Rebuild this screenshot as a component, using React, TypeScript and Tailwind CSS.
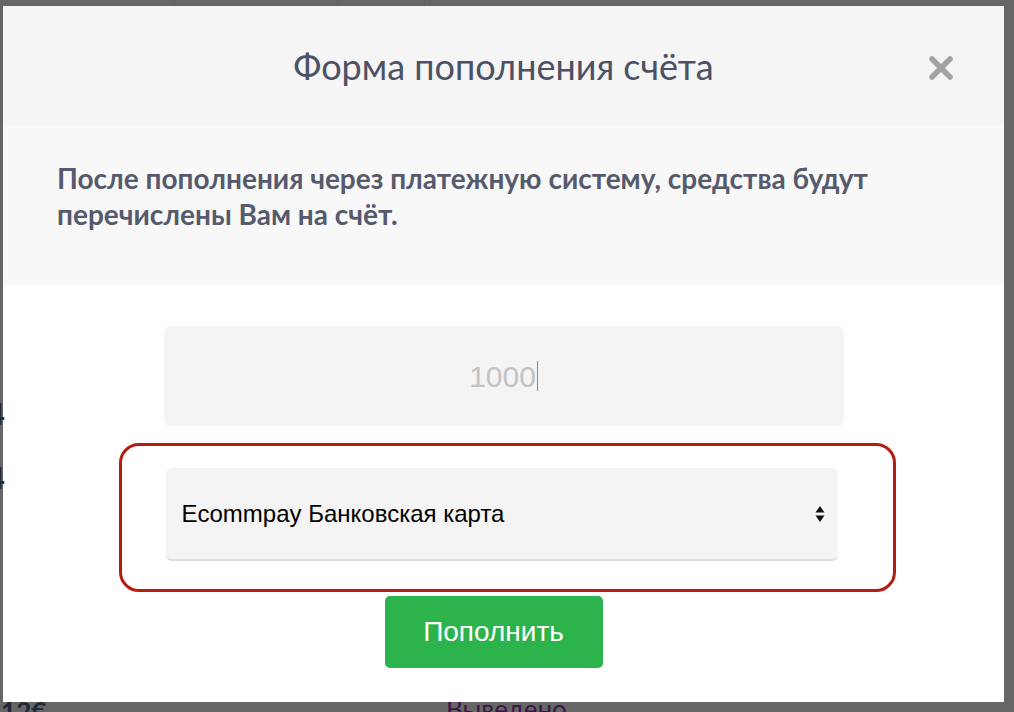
const lato = "font-['Lato','Noto_Sans',sans-serif]";
const helv = "font-['Liberation_Sans','Arial',sans-serif]";

function CloseIcon() {
  return (
    <svg width="26" height="26" viewBox="0 0 26 26" className="block">
      <path d="M4 4 L22 22 M22 4 L4 22" stroke="#a2a2a2" strokeWidth="5.5" strokeLinecap="round" />
    </svg>
  );
}

function SelectArrows() {
  return (
    <svg width="10" height="18" viewBox="0 0 10 18" className="block">
      <path d="M5 1 L9.5 7.5 L0.5 7.5 Z" fill="#111" />
      <path d="M5 17 L9.5 10.5 L0.5 10.5 Z" fill="#111" />
    </svg>
  );
}

const App = () => {
  return (
    <div className="relative h-[712px] w-[1014px] overflow-hidden bg-[#666666]">
      {/* page behind the overlay */}
      <div className="flex h-[6px]">
        <div className="w-[175px] border-r border-[#5f5f5f]" />
        <div className="w-[163px] border-r border-[#5f5f5f]" />
        <div className="w-[87px] border-r border-[#5f5f5f]" />
      </div>
      <div className={`absolute left-[-14px] top-[692px] text-[26px] font-bold text-[#22283a] ${lato}`}>512€</div>
      <div className={`absolute left-[446px] top-[690px] text-[26px] text-[#3b1645] ${lato}`}>Выведено</div>

      {/* modal */}
      <div className="absolute left-[3px] top-[6px] flex h-[696px] w-[1001px] flex-col bg-white">
        <div className="relative flex h-[120px] items-center justify-center bg-[#f5f5f5]">
          <h2 className={`text-[36px] leading-none text-[#4c5165] ${lato}`}>Форма пополнения счёта</h2>
          <button className="absolute right-[50px] top-[49px]">
            <CloseIcon />
          </button>
        </div>
        <div className="h-[159px] bg-[#f8f8f8] px-[54px] pt-[34px]">
          <p className={`text-[28px] font-bold leading-[36px] text-[#555a6d] ${lato}`}>
            После пополнения через платежную систему, средства будут перечислены Вам на счёт.
          </p>
        </div>

        <div className="flex flex-col items-center pt-[41px]">
          <div className="flex h-[100px] w-[680px] items-center justify-center rounded-[6px] bg-[#f4f4f4]">
            <span className={`text-[30px] text-[#c3c3c3] ${helv}`}>1000</span>
            <span className="ml-[1px] h-[30px] w-[1px] bg-[#8a8a8a]" />
          </div>

          <div className="mr-[4px] mt-[42px] flex h-[93px] w-[672px] items-center justify-between rounded-[6px] border-b-2 border-[#dedede] bg-[#f4f4f4] pl-[16px] pr-[13px]">
            <span className={`text-[24px] text-black ${helv}`}>Ecommpay Банковская карта</span>
            <SelectArrows />
          </div>

          <button
            className={`mr-[20px] mt-[35px] flex h-[72px] w-[218px] items-center justify-center rounded-[5px] bg-[#2db34c] text-[28px] text-white ${helv}`}
          >
            Пополнить
          </button>
        </div>
      </div>

      {/* red highlight drawn over the form */}
      <div className="pointer-events-none absolute left-[119px] top-[443px] h-[149px] w-[777px] rounded-[20px] border-[3px] border-[#b51c12]" />

      {/* slivers of page text poking over the modal edge */}
      <div className={`absolute left-[-30px] top-[398px] flex flex-col gap-[34px] text-[30px] font-bold leading-none text-[#262c3f] ${lato}`}>
        <span>24</span>
        <span>24</span>
        <span className="text-[#b8650e]">€</span>
      </div>
    </div>
  );
};

export default App;
